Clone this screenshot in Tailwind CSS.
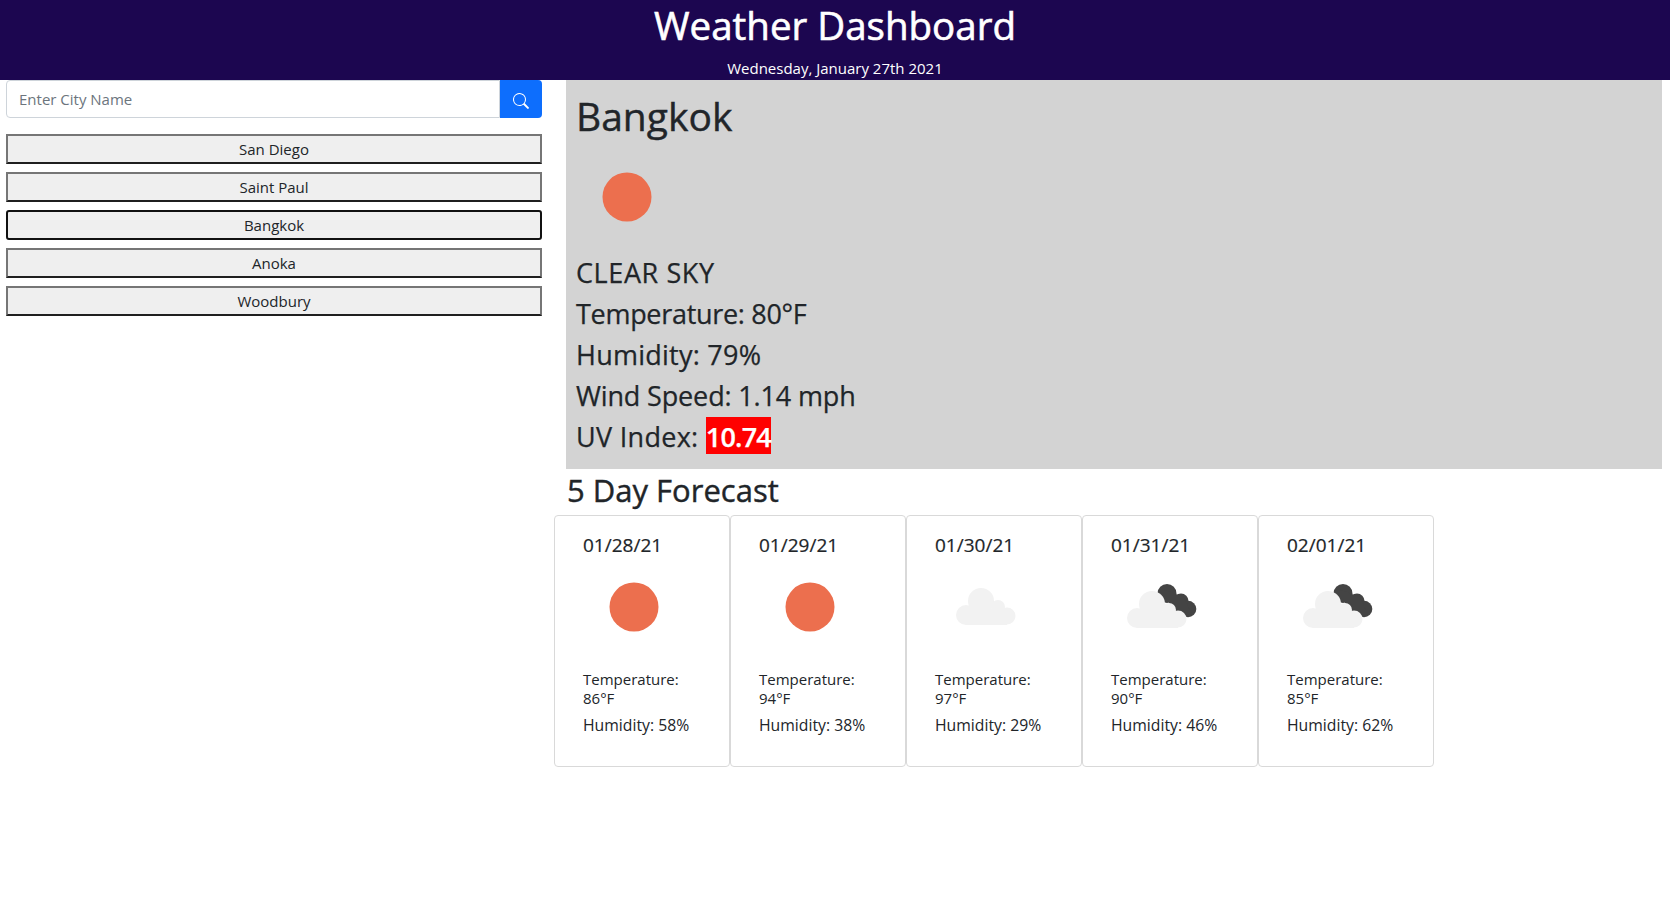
<!DOCTYPE html>
<html lang="en">
<head>
  <meta charset="UTF-8">
  <meta name="viewport" content="width=device-width, initial-scale=1.0">
  <title>Weather Dashboard</title>
  <script src="https://cdn.jsdelivr.net/npm/@tailwindcss/browser@4"></script>
</head>
<body class="bg-white text-[#212529] font-['Open_Sans',sans-serif]">
  <header class="h-[80px] bg-[#1c0650] text-white text-center overflow-hidden">
    <h1 class="text-[38.5px] leading-[50px] [-webkit-text-stroke:0.6px]">Weather Dashboard</h1>
    <p class="text-[15px] leading-[24px] mt-[6px]">Wednesday, January 27th 2021</p>
  </header>

  <div class="flex">
    <!-- Search and history -->
    <aside class="w-[566px] shrink-0 pl-[6px] pr-[24px]">
      <div class="flex h-[38px]">
        <input class="flex-1 min-w-0 border border-[#ced4da] rounded-l-[4px] px-3 text-[15px] placeholder:text-[#6c757d]" placeholder="Enter City Name">
        <button class="w-[42px] bg-[#0d6efd] rounded-r-[4px] flex items-center justify-center">
          <svg class="mt-[3px]" width="16" height="16" viewBox="0 0 16 16" fill="white"><path d="M11.742 10.344a6.5 6.5 0 1 0-1.397 1.398h-.001l3.85 3.85a1 1 0 0 0 1.415-1.414l-3.85-3.85zM12 6.5a5.5 5.5 0 1 1-11 0 5.5 5.5 0 0 1 11 0z"/></svg>
        </button>
      </div>
      <div class="mt-[16px] flex flex-col gap-[8px] text-[15px]">
        <button class="h-[30px] bg-[#efefef] border-2 border-t-[#767676] border-l-[#767676] border-r-[#767676] border-b-[#1f1f1f]">San Diego</button>
        <button class="h-[30px] bg-[#efefef] border-2 border-t-[#767676] border-l-[#767676] border-r-[#767676] border-b-[#1f1f1f]">Saint Paul</button>
        <button class="h-[30px] bg-[#efefef] border-2 border-[#111] rounded-[3px]">Bangkok</button>
        <button class="h-[30px] bg-[#efefef] border-2 border-t-[#767676] border-l-[#767676] border-r-[#767676] border-b-[#1f1f1f]">Anoka</button>
        <button class="h-[30px] bg-[#efefef] border-2 border-t-[#767676] border-l-[#767676] border-r-[#767676] border-b-[#1f1f1f]">Woodbury</button>
      </div>
    </aside>

    <main class="flex-1 min-w-0">
      <!-- Current weather -->
      <section class="w-[1096px] h-[389px] bg-[#d3d3d3] pl-[10px]">
        <h2 class="text-[39px] leading-[48px] pt-[12px] h-[51px] box-content [-webkit-text-stroke:0.4px]">Bangkok</h2>
        <svg class="block ml-[1px] mt-[4px]" width="100" height="100" viewBox="0 0 100 100"><circle cx="50" cy="50" r="24.5" fill="#ec6f4e"/></svg>
        <div class="text-[27px] leading-[41px] mt-[5px] [-webkit-text-stroke:0.25px]">
          <p class="tracking-[0.6px]">CLEAR SKY</p>
          <p class="tracking-[-0.3px]">Temperature: 80°F</p>
          <p class="tracking-[0.25px]">Humidity: 79%</p>
          <p class="tracking-[-0.15px]">Wind Speed: 1.14 mph</p>
          <p class="tracking-[0.3px]">UV Index: <span class="inline-block bg-[#ff0000] text-white font-semibold pt-[2px] leading-[35px] tracking-[-0.8px]">10.74</span></p>
        </div>
      </section>

      <h3 class="text-[31px] leading-[42px] ml-[1px] [-webkit-text-stroke:0.4px]">5 Day Forecast</h3>

      <!-- Forecast cards -->
      <div class="flex ml-[-12px] mt-[4px] items-start">
        <div class="w-[176px] h-[252px] border border-[#d9d9d9] rounded-[4px] pl-[28px] pt-[15px]">
          <p class="text-[19px] leading-[28px] [-webkit-text-stroke:0.2px]">01/28/21</p>
          <svg class="block ml-[1px] mt-[-2px]" width="100" height="100" viewBox="0 0 100 100"><circle cx="50" cy="50" r="24.5" fill="#ec6f4e"/></svg>
          <p class="text-[15px] leading-[19px] mt-[13px] w-[110px]">Temperature: 86°F</p>
          <p class="text-[15.75px] leading-[19px] mt-[8px]">Humidity: 58%</p>
        </div>
        <div class="w-[176px] h-[252px] border border-[#d9d9d9] rounded-[4px] pl-[28px] pt-[15px]">
          <p class="text-[19px] leading-[28px] [-webkit-text-stroke:0.2px]">01/29/21</p>
          <svg class="block ml-[1px] mt-[-2px]" width="100" height="100" viewBox="0 0 100 100"><circle cx="50" cy="50" r="24.5" fill="#ec6f4e"/></svg>
          <p class="text-[15px] leading-[19px] mt-[13px] w-[110px]">Temperature: 94°F</p>
          <p class="text-[15.75px] leading-[19px] mt-[8px]">Humidity: 38%</p>
        </div>
        <div class="w-[176px] h-[252px] border border-[#d9d9d9] rounded-[4px] pl-[28px] pt-[15px]">
          <p class="text-[19px] leading-[28px] [-webkit-text-stroke:0.2px]">01/30/21</p>
          <svg class="block ml-[1px] mt-[-2px]" width="100" height="100" viewBox="0 0 100 100"><g fill="#f2f2f2"><circle cx="30" cy="58" r="10"/><circle cx="45" cy="44" r="13"/><circle cx="62" cy="50" r="7"/><circle cx="71" cy="59" r="8.5"/><rect x="30" y="52" width="41" height="16"/></g></svg>
          <p class="text-[15px] leading-[19px] mt-[13px] w-[110px]">Temperature: 97°F</p>
          <p class="text-[15.75px] leading-[19px] mt-[8px]">Humidity: 29%</p>
        </div>
        <div class="w-[176px] h-[252px] border border-[#d9d9d9] rounded-[4px] pl-[28px] pt-[15px]">
          <p class="text-[19px] leading-[28px] [-webkit-text-stroke:0.2px]">01/31/21</p>
          <svg class="block ml-[1px] mt-[-2px]" width="100" height="100" viewBox="0 0 100 100"><g fill="#444"><circle cx="55" cy="36.5" r="9.5"/><circle cx="69" cy="44" r="7.5"/><circle cx="76" cy="52" r="8.3"/><path d="M50 32 72 40 80 58 62 56z"/></g><g fill="#f2f2f2"><circle cx="25" cy="61" r="10"/><circle cx="40" cy="47" r="13"/><circle cx="57" cy="53" r="7"/><circle cx="66" cy="62" r="8.5"/><rect x="25" y="55" width="41" height="16"/></g></svg>
          <p class="text-[15px] leading-[19px] mt-[13px] w-[110px]">Temperature: 90°F</p>
          <p class="text-[15.75px] leading-[19px] mt-[8px]">Humidity: 46%</p>
        </div>
        <div class="w-[176px] h-[252px] border border-[#d9d9d9] rounded-[4px] pl-[28px] pt-[15px]">
          <p class="text-[19px] leading-[28px] [-webkit-text-stroke:0.2px]">02/01/21</p>
          <svg class="block ml-[1px] mt-[-2px]" width="100" height="100" viewBox="0 0 100 100"><g fill="#444"><circle cx="55" cy="36.5" r="9.5"/><circle cx="69" cy="44" r="7.5"/><circle cx="76" cy="52" r="8.3"/><path d="M50 32 72 40 80 58 62 56z"/></g><g fill="#f2f2f2"><circle cx="25" cy="61" r="10"/><circle cx="40" cy="47" r="13"/><circle cx="57" cy="53" r="7"/><circle cx="66" cy="62" r="8.5"/><rect x="25" y="55" width="41" height="16"/></g></svg>
          <p class="text-[15px] leading-[19px] mt-[13px] w-[110px]">Temperature: 85°F</p>
          <p class="text-[15.75px] leading-[19px] mt-[8px]">Humidity: 62%</p>
        </div>
      </div>
    </main>
  </div>
</body>
</html>
